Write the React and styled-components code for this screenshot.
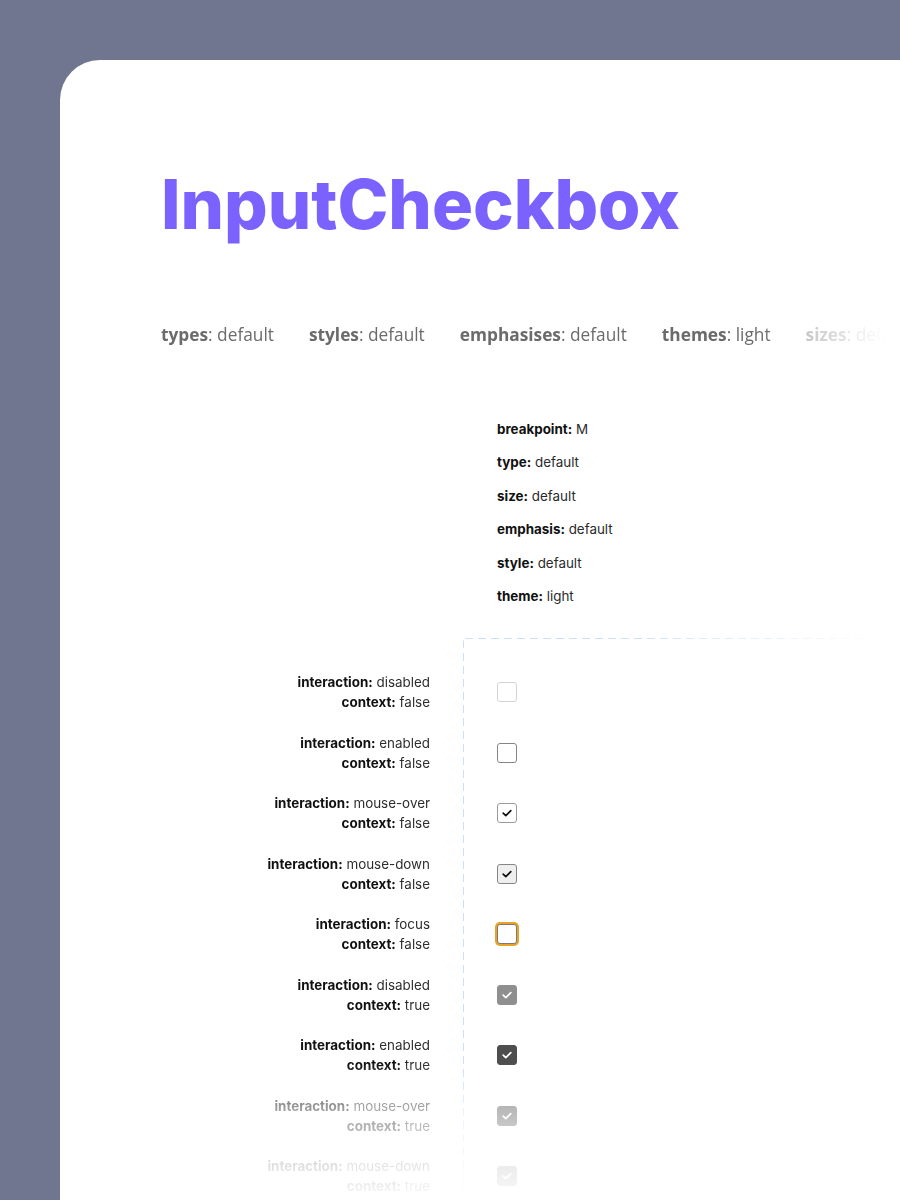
import React from 'react';
import styled, { createGlobalStyle, css } from 'styled-components';

const GlobalStyle = createGlobalStyle`
  html, body {
    margin: 0;
    padding: 0;
    background: #70768f;
    overflow: hidden;
  }
  body {
    font-family: Inter, "Noto Sans", sans-serif;
  }
`;

const filters = [
  { name: 'types', value: 'default' },
  { name: 'styles', value: 'default' },
  { name: 'emphasises', value: 'default' },
  { name: 'themes', value: 'light' },
  { name: 'sizes', value: 'default' },
];

const props = [
  { name: 'breakpoint', value: 'M' },
  { name: 'type', value: 'default' },
  { name: 'size', value: 'default' },
  { name: 'emphasis', value: 'default' },
  { name: 'style', value: 'default' },
  { name: 'theme', value: 'light' },
];

const states = [
  { interaction: 'disabled', context: false },
  { interaction: 'enabled', context: false },
  { interaction: 'mouse-over', context: false },
  { interaction: 'mouse-down', context: false },
  { interaction: 'focus', context: false },
  { interaction: 'disabled', context: true },
  { interaction: 'enabled', context: true },
  { interaction: 'mouse-over', context: true },
  { interaction: 'mouse-down', context: true },
];

function CheckMark() {
  return (
    <svg width="20" height="20" viewBox="0 0 20 20" fill="none">
      <path
        d="M6.2 10.2l2.6 2.5 5-5"
        stroke="currentColor"
        strokeWidth="1.7"
        strokeLinecap="round"
        strokeLinejoin="round"
      />
    </svg>
  );
}

function Checkbox({ interaction, context }) {
  const checked = context || interaction === 'mouse-over' || interaction === 'mouse-down';
  return (
    <Box $interaction={interaction} $context={context}>
      {checked && <CheckMark />}
    </Box>
  );
}

function App() {
  return (
    <>
      <GlobalStyle />
      <Card>
        <Title>InputCheckbox</Title>
        <FilterBar>
          {filters.map((f) => (
            <Filter key={f.name}>
              <b>{f.name}</b>: {f.value}
            </Filter>
          ))}
        </FilterBar>
        <PropList>
          {props.map((p) => (
            <Prop key={p.name}>
              <b>{p.name}:</b> {p.value}
            </Prop>
          ))}
        </PropList>
        <Matrix>
          <LabelColumn>
            {states.map((s, i) => (
              <StateLabel key={i}>
                <span>
                  <b>interaction:</b> {s.interaction}
                </span>
                <span>
                  <b>context:</b> {String(s.context)}
                </span>
              </StateLabel>
            ))}
          </LabelColumn>
          <Frame>
            {states.map((s, i) => (
              <Cell key={i}>
                <Checkbox interaction={s.interaction} context={s.context} />
              </Cell>
            ))}
          </Frame>
        </Matrix>
      </Card>
    </>
  );
}

const Card = styled.main`
  box-sizing: border-box;
  width: 840px;
  min-height: 1140px;
  margin: 60px 0 0 60px;
  padding: 111px 0 0 101px;
  background: #ffffff;
  border-radius: 40px 0 0 0;
  overflow: hidden;
`;

const Title = styled.h1`
  margin: 0;
  font-family: Inter, sans-serif;
  font-size: 68.5px;
  font-weight: 800;
  line-height: 1;
  color: #7b62ff;
`;

const FilterBar = styled.div`
  display: flex;
  gap: 35px;
  margin-top: 83px;
  white-space: nowrap;
  -webkit-mask-image: linear-gradient(to right, #000 604px, rgba(0, 0, 0, 0.4) 640px, transparent 725px);
  mask-image: linear-gradient(to right, #000 604px, rgba(0, 0, 0, 0.4) 640px, transparent 725px);
`;

const Filter = styled.span`
  font-family: "Open Sans", sans-serif;
  font-size: 17.3px;
  line-height: 24px;
  color: #6b6b6b;
  b {
    font-weight: 700;
  }
`;

const PropList = styled.div`
  display: flex;
  flex-direction: column;
  gap: 13.6px;
  margin: 72px 0 0 336px;
`;

const Prop = styled.div`
  font-size: 13.4px;
  line-height: 20px;
  color: #2a2a2a;
  b {
    font-weight: 700;
    color: #111;
  }
`;

const Matrix = styled.section`
  display: grid;
  grid-template-columns: 269px 1fr;
  column-gap: 33px;
  margin-top: 32px;
  -webkit-mask-image: linear-gradient(to bottom, #000 425px, rgba(0, 0, 0, 0.42) 470px, rgba(0, 0, 0, 0.12) 530px, transparent 575px);
  mask-image: linear-gradient(to bottom, #000 425px, rgba(0, 0, 0, 0.42) 470px, rgba(0, 0, 0, 0.12) 530px, transparent 575px);
`;

const LabelColumn = styled.div`
  display: flex;
  flex-direction: column;
  gap: 20.5px;
  padding-top: 34px;
`;

const StateLabel = styled.div`
  display: flex;
  flex-direction: column;
  align-items: flex-end;
  font-size: 13.4px;
  line-height: 20px;
  color: #2e2e2e;
  white-space: nowrap;
  b {
    font-weight: 700;
    color: #111;
  }
`;

const Frame = styled.div`
  display: flex;
  flex-direction: column;
  gap: 20.5px;
  padding: 34px 0 0 34px;
  border-top-left-radius: 4px;
  background-image:
    repeating-linear-gradient(to right, #c8e0fb 0 8px, transparent 8px 13px),
    repeating-linear-gradient(to bottom, #c8e0fb 0 8px, transparent 8px 13px);
  background-size: 100% 1px, 1px 100%;
  background-position: 2px 0, 0 2px;
  background-repeat: no-repeat;
  -webkit-mask-image: linear-gradient(to right, #000 140px, transparent 430px);
  mask-image: linear-gradient(to right, #000 140px, transparent 430px);
`;

const Cell = styled.div`
  display: flex;
  align-items: center;
  height: 40px;
`;

const boxLooks = {
  'disabled-false': css`
    border-color: #d3d3d3;
  `,
  'enabled-false': css`
    border-color: #858585;
  `,
  'mouse-over-false': css`
    border-color: #9b9b9b;
    color: #111;
  `,
  'mouse-down-false': css`
    border-color: #858585;
    background: #efefef;
    color: #111;
  `,
  'focus-false': css`
    border-color: #7a7a7a;
    box-shadow: 0 0 0 2px #eaa222;
  `,
  'disabled-true': css`
    border-color: #8f8f8f;
    background: #8f8f8f;
    color: #fff;
  `,
  'enabled-true': css`
    border-color: #4e4e4e;
    background: #4e4e4e;
    color: #fff;
  `,
  'mouse-over-true': css`
    border-color: #555;
    background: #555;
    color: #fff;
  `,
  'mouse-down-true': css`
    border-color: #6a6a6a;
    background: #6a6a6a;
    color: #fff;
  `,
};

const Box = styled.div`
  box-sizing: border-box;
  display: flex;
  align-items: center;
  justify-content: center;
  width: 20px;
  height: 20px;
  border: 1px solid #858585;
  border-radius: 3px;
  background: #fff;
  svg {
    flex: none;
  }
  ${({ $interaction, $context }) => boxLooks[`${$interaction}-${$context}`]}
`;

export default App;
